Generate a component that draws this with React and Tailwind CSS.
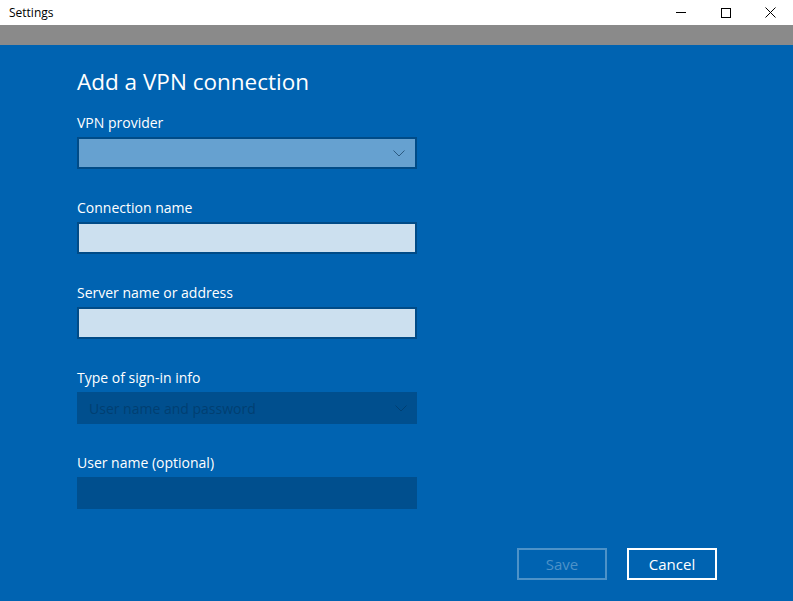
import React from "react";

const font = { fontFamily: '"Segoe UI", "Open Sans", "Noto Sans", sans-serif' };

function Chevron({ color }) {
  return (
    <svg width="12" height="7" viewBox="0 0 12 7" className="shrink-0">
      <path d="M0.5 0.5 L6 6 L11.5 0.5" fill="none" stroke={color} strokeWidth="1" />
    </svg>
  );
}

function Label({ children }) {
  return <div className="text-[14px] leading-[19px] text-white mb-[5px]">{children}</div>;
}

export default function App() {
  return (
    <div className="w-[793px] h-[601px] flex flex-col overflow-hidden" style={font}>
      <div className="h-[25px] bg-white flex items-center">
        <div className="pl-[9px] text-[12px] text-black flex-1">Settings</div>
        <div className="flex h-full">
          <div className="w-[45px] flex items-center justify-center">
            <div className="w-[10px] h-px bg-black" />
          </div>
          <div className="w-[45px] flex items-center justify-center">
            <div className="w-[10px] h-[10px] border border-black" />
          </div>
          <div className="w-[45px] flex items-center justify-center">
            <svg width="11" height="11" viewBox="0 0 11 11">
              <path d="M0.5 0.5 L10.5 10.5 M10.5 0.5 L0.5 10.5" stroke="#000" strokeWidth="1" />
            </svg>
          </div>
        </div>
      </div>
      <div className="h-[20px] bg-[#8a8a8a]" />
      <div className="flex-1 bg-[#0063b1] flex flex-col pl-[77px] pr-[76px] pt-[21px] pb-[21px]">
        <div className="text-[22.5px] leading-[32px] text-white mb-[15px]">Add a VPN connection</div>

        <div className="w-[340px] flex flex-col">
          <Label>VPN provider</Label>
          <div className="h-[32px] bg-[#66a1d0] border-2 border-[#004b87] flex items-center justify-end pr-[10px]">
            <Chevron color="#2c5a80" />
          </div>

          <div className="mt-[29px]">
            <Label>Connection name</Label>
            <div className="h-[32px] bg-[#cce0ef] border-2 border-[#004b87]" />
          </div>

          <div className="mt-[29px]">
            <Label>Server name or address</Label>
            <div className="h-[32px] bg-[#cce0ef] border-2 border-[#004b87]" />
          </div>

          <div className="mt-[29px]">
            <Label>Type of sign-in info</Label>
            <div className="h-[32px] bg-[#004f8e] flex items-center justify-between pl-[12px] pr-[10px]">
              <span className="text-[14px] text-[#003f72]">User name and password</span>
              <Chevron color="#003f72" />
            </div>
          </div>

          <div className="mt-[29px]">
            <Label>User name (optional)</Label>
            <div className="h-[32px] bg-[#004f8e]" />
          </div>
        </div>

        <div className="mt-auto flex justify-end gap-[20px]">
          <div className="w-[90px] h-[32px] border-2 border-[#4d92c8] flex items-center justify-center text-[15px] text-[#4d92c8]">
            Save
          </div>
          <div className="w-[90px] h-[32px] border-2 border-white flex items-center justify-center text-[15px] text-white">
            Cancel
          </div>
        </div>
      </div>
    </div>
  );
}
